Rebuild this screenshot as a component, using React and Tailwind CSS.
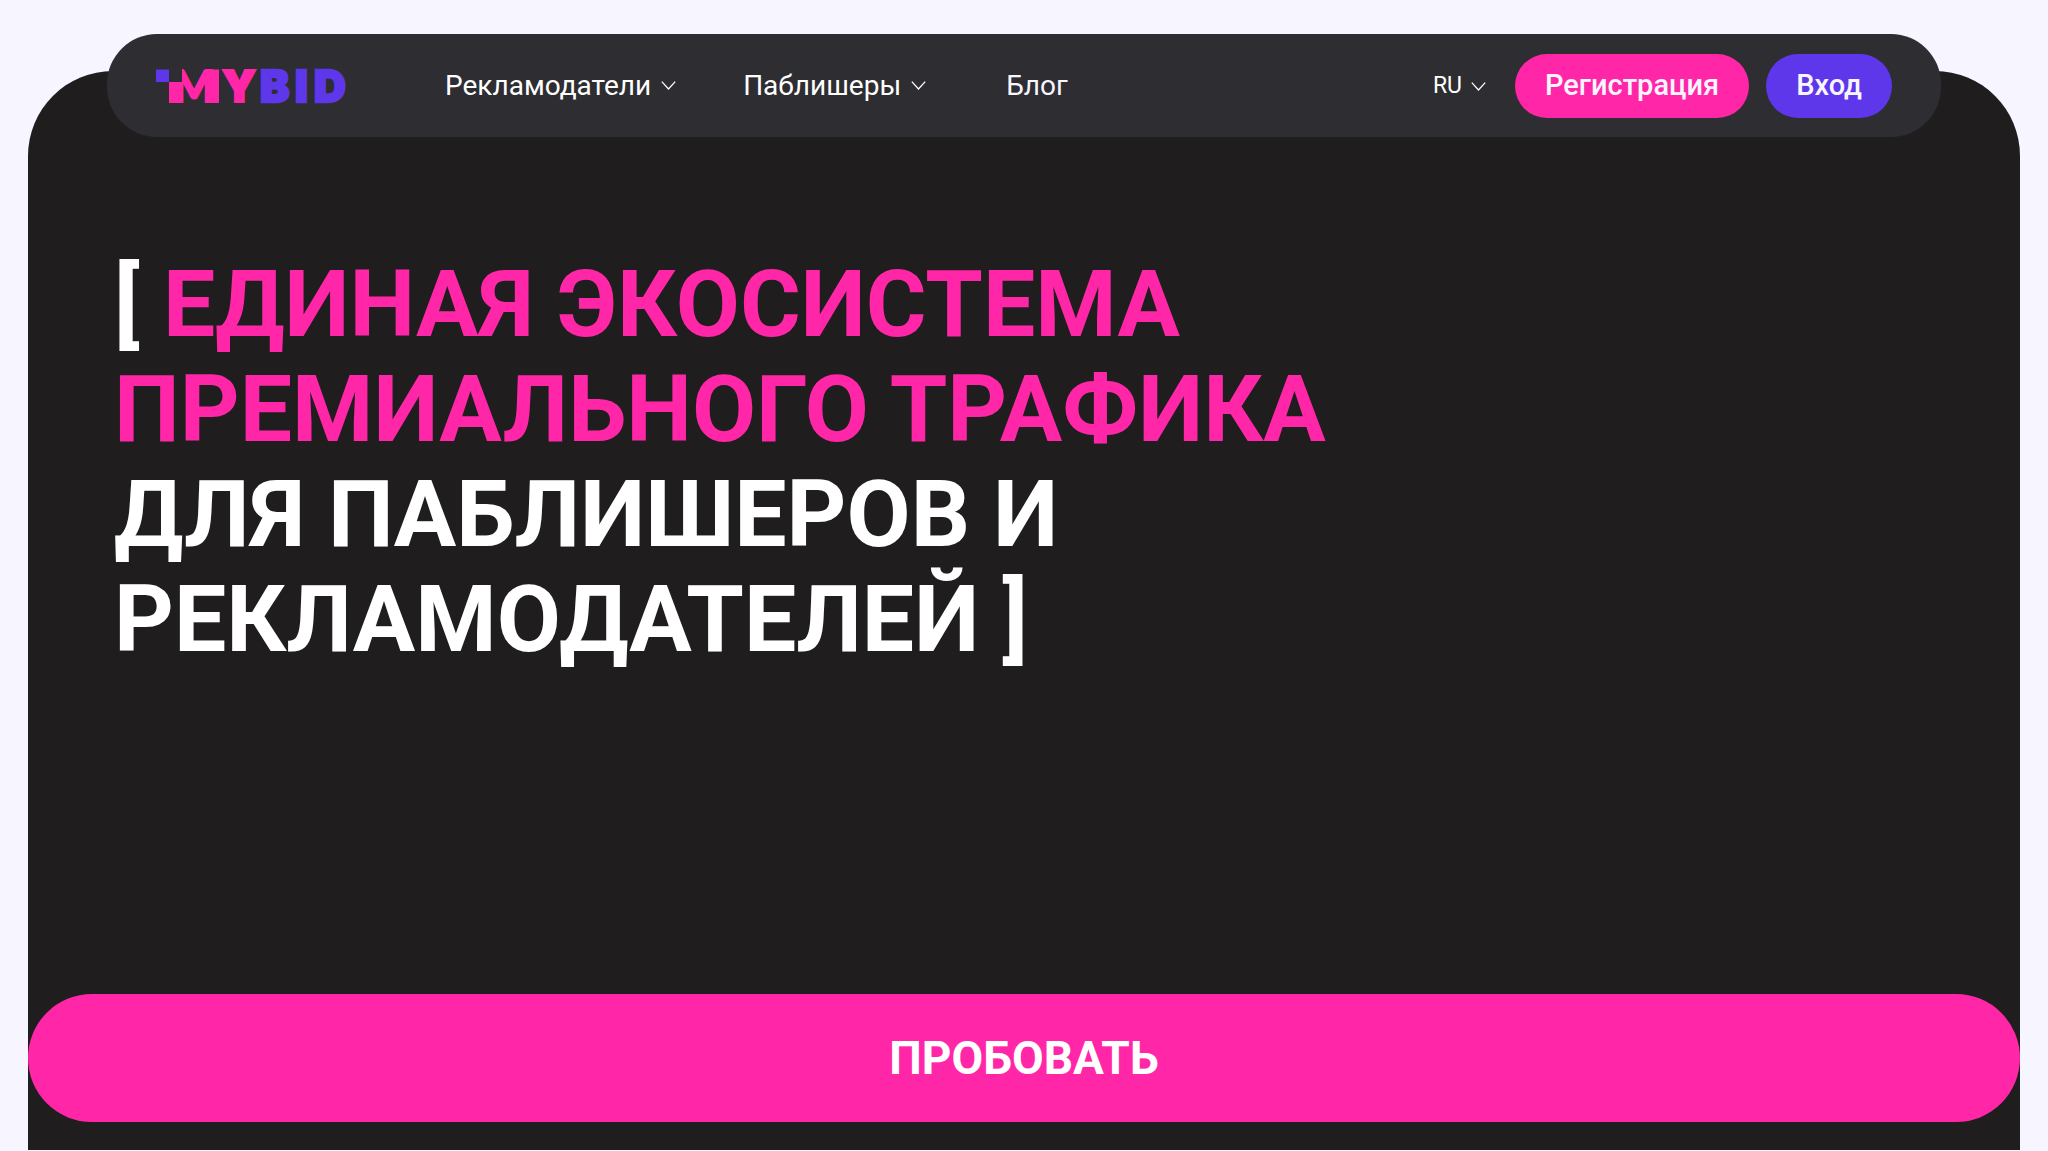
import React from 'react';

function Chevron() {
  return (
    <svg viewBox="0 0 15 9" aria-hidden="true" className="h-[9px] w-[15px] shrink-0" fill="none" stroke="currentColor" strokeWidth="1.3">
      <path d="M0.8 0.6 L7.5 8 L14.2 0.6" />
    </svg>
  );
}

function Logo() {
  return (
    <a href="#home" aria-label="MYBID" className="block shrink-0">
      <svg viewBox="0 0 191 34" className="h-[34px] w-[191px] overflow-visible" fontFamily="Inter, sans-serif" fontWeight="900" fontSize="44">
        <g fill="#ff27a8" stroke="#ff27a8" strokeWidth="2">
          <text x="17" y="32.5">
            <tspan fontFamily="Lato, sans-serif">M</tspan>
          </text>
          <text x="66" y="33">Y</text>
        </g>
        <text y="33" x="104 139 158" fill="#5f37eb" stroke="#5f37eb" strokeWidth="2.4">BID</text>
        <path d="M10 -2 H26 V13 H10 Z" fill="#2e2d31" />
        <path d="M13 13 H26 V34 H13 Z M50 0.5 H63 V34 H50 Z" fill="#ff27a8" />
        <path d="M0 0.5 H13 V13 H0 Z" fill="#5f37eb" />
      </svg>
    </a>
  );
}

export default function App() {
  return (
    <div className="min-h-screen bg-[#f7f5ff] px-7 pt-[34px] font-['Roboto',sans-serif] text-white">
      <header className="relative z-10 mx-[79px] flex h-[103px] items-center rounded-[50px] bg-[#2e2d31] px-[49px]">
        <Logo />
        <nav aria-label="Main" className="ml-[98px] flex items-center text-[28px]">
          <button type="button" className="flex items-center gap-[10px]">
            Рекламодатели
            <Chevron />
          </button>
          <button type="button" className="ml-[67px] flex items-center gap-[10px]">
            Паблишеры
            <Chevron />
          </button>
          <a href="#blog" className="ml-20 text-[#f7f5ff]">Блог</a>
        </nav>
        <div className="ml-auto flex items-center">
          <button type="button" className="mr-[29px] flex items-center gap-[9px] pt-0.5 text-[23px]">
            RU
            <Chevron />
          </button>
          <button type="button" className="mr-[17px] h-16 rounded-full bg-[#ff27a8] px-[30px] text-[29px] font-medium text-[#f7f5ff]">
            Регистрация
          </button>
          <button type="button" className="h-16 rounded-full bg-[#5f37eb] px-[30px] text-[29px] font-medium text-[#f7f5ff]">
            Вход
          </button>
        </div>
      </header>
      <main className="-mt-[66px] flex min-h-[1079px] flex-col rounded-t-[85px] bg-[#1f1d1e] pb-7">
        <h1 className="px-[86px] pt-[181px] text-[93px] leading-[105px] font-bold">
          [ <span className="text-[#ff27a8]">ЕДИНАЯ ЭКОСИСТЕМА<br />ПРЕМИАЛЬНОГО ТРАФИКА</span>
          <br />
          ДЛЯ ПАБЛИШЕРОВ И<br />
          РЕКЛАМОДАТЕЛЕЙ ]
        </h1>
        <button type="button" className="mt-auto h-32 w-full rounded-full bg-[#ff27a8] text-[46px] font-bold">
          ПРОБОВАТЬ
        </button>
      </main>
    </div>
  );
}
